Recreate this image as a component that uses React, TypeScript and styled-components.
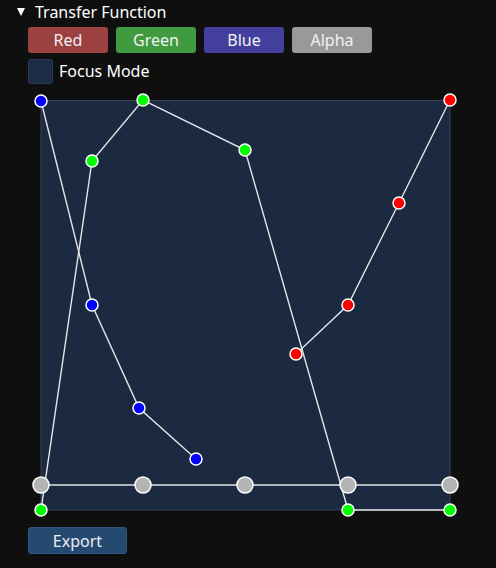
import React from "react";
import styled, { createGlobalStyle } from "styled-components";

const Global = createGlobalStyle`
  html, body { margin: 0; padding: 0; background: #0f0f0f; }
  body { font-family: "Noto Sans", "Open Sans", sans-serif; color: #ffffff; }
`;

const Page = styled.div`
  width: 496px;
  height: 568px;
  background: #0f0f0f;
  display: flex;
  flex-direction: column;
  font-size: 16px;
`;

const Header = styled.div`
  height: 24px;
  display: flex;
  align-items: center;
  padding-left: 17px;
  gap: 10px;
  line-height: 24px;
`;

const Arrow = styled.span`
  width: 0;
  height: 0;
  border-left: 4.5px solid transparent;
  border-right: 4.5px solid transparent;
  border-top: 8px solid #ffffff;
  margin-top: -1px;
`;

const ButtonRow = styled.div`
  display: flex;
  gap: 8px;
  margin: 3px 0 0 28px;
`;

const ChannelButton = styled.div<{ $bg: string }>`
  width: 80px;
  height: 26px;
  box-sizing: border-box;
  border-radius: 3px;
  background: ${(p) => p.$bg};
  display: flex;
  align-items: center;
  justify-content: center;
  color: #f2f2f2;
`;

const CheckRow = styled.label`
  display: flex;
  align-items: center;
  gap: 6px;
  margin: 5px 0 0 28px;
  height: 26px;
`;

const CheckBox = styled.span`
  width: 25px;
  height: 25px;
  box-sizing: border-box;
  border-radius: 3px;
  background: #1d2c45;
  border: 1px solid #2b3a52;
`;

const Editor = styled.svg`
  display: block;
  margin-top: 4px;
`;

const ExportButton = styled.div`
  width: 99px;
  height: 27px;
  box-sizing: border-box;
  margin: 7px 0 0 28px;
  border-radius: 3px;
  background: #244a72;
  border: 1px solid #2e5681;
  display: flex;
  align-items: center;
  justify-content: center;
  color: #eeeeee;
`;

type P = [number, number];

const red: P[] = [
  [296, 354],
  [348, 305],
  [399, 203],
  [450, 100],
];
const green: P[] = [
  [41, 510],
  [92, 161],
  [143, 100],
  [245, 150],
  [348, 510],
  [450, 510],
];
const blue: P[] = [
  [41, 101],
  [92, 305],
  [139, 408],
  [196, 459],
];
const alpha: P[] = [
  [41, 485],
  [143, 485],
  [245, 485],
  [348, 485],
  [450, 485],
];

const toPts = (a: P[]) => a.map((p) => p.join(",")).join(" ");

const channels: { pts: P[]; color: string; r: number }[] = [
  { pts: red, color: "#ff0000", r: 6 },
  { pts: green, color: "#00ff00", r: 6 },
  { pts: blue, color: "#0000ff", r: 6 },
  { pts: alpha, color: "#b4b4b4", r: 8 },
];

export default function App() {
  return (
    <Page>
      <Global />
      <Header>
        <Arrow />
        <span>Transfer Function</span>
      </Header>
      <ButtonRow>
        <ChannelButton $bg="#9c4141">Red</ChannelButton>
        <ChannelButton $bg="#3f9a40">Green</ChannelButton>
        <ChannelButton $bg="#423f9d">Blue</ChannelButton>
        <ChannelButton $bg="#999999">Alpha</ChannelButton>
      </ButtonRow>
      <CheckRow>
        <CheckBox />
        <span>Focus Mode</span>
      </CheckRow>
      <Editor width={496} height={432} viewBox="0 88 496 432">
        <rect x={41} y={100.5} width={409} height={409.5} fill="#1b2a40" stroke="#37445a" strokeWidth={1} />
        {channels.map((c, i) => (
          <polyline key={"l" + i} points={toPts(c.pts)} fill="none" stroke="#e6e6e6" strokeWidth={1.4} />
        ))}
        {channels.map((c, i) =>
          c.pts.map((p, j) => (
            <circle key={`c${i}-${j}`} cx={p[0]} cy={p[1]} r={c.r} fill={c.color} stroke="#ffffff" strokeWidth={1.5} />
          ))
        )}
      </Editor>
      <ExportButton>Export</ExportButton>
    </Page>
  );
}
